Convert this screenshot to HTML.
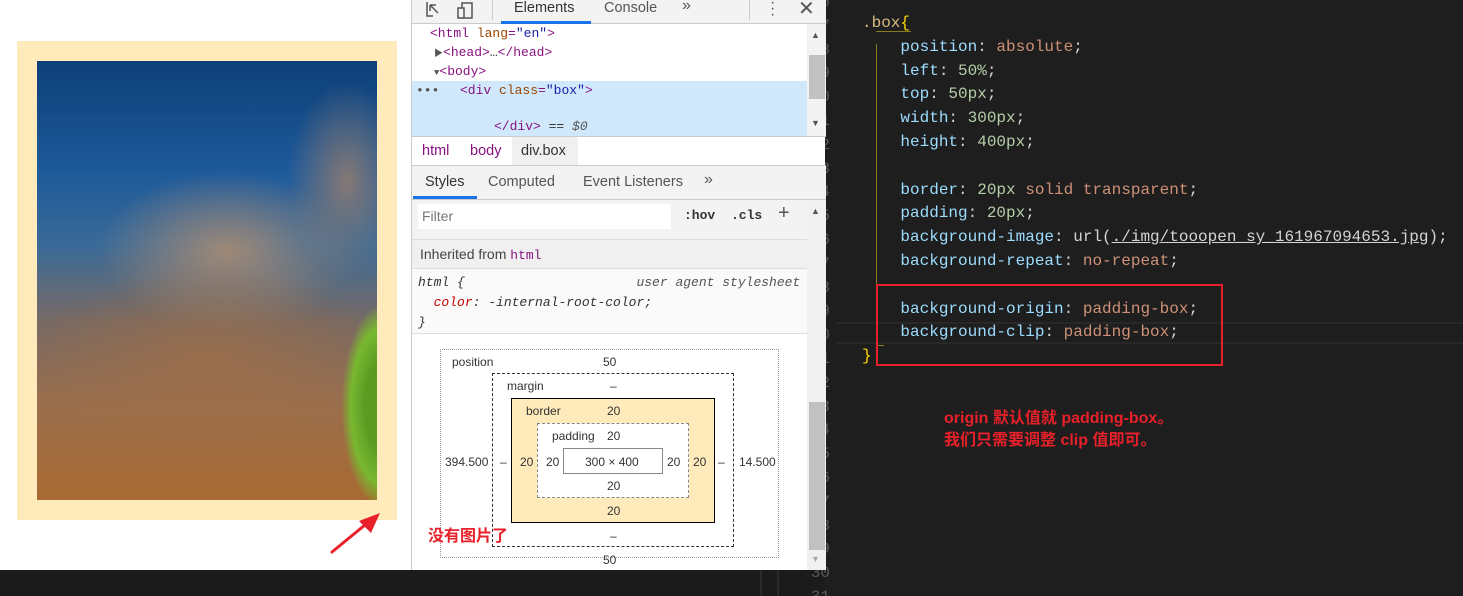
<!DOCTYPE html>
<html style="overflow:hidden;width:1463px;height:596px"><head><meta charset="utf-8"><style>
*{margin:0;padding:0;box-sizing:border-box}
body{width:1463px;height:596px;overflow:hidden;background:#1e1e1e;position:relative;font-family:"Liberation Sans","Noto Sans CJK SC",sans-serif}
.abs{position:absolute}
.mono{font-family:"Liberation Mono","Noto Sans CJK SC",monospace}
#page{left:0;top:0;width:411px;height:570px;background:#fff}
#bottom{left:0;top:570px;width:825px;height:26px;background:#1b1b1b}
#dt{left:411px;top:0;width:414px;height:570px;background:#fff;border-left:1px solid #ccc;font-size:14px;color:#333}
.code{font-size:16px;line-height:23.8px;left:862px;top:12px;color:#d4d4d4;white-space:pre}
.p{color:#9cdcfe}.v{color:#ce9178}.n{color:#b5cea8}
.tag{color:#881280}.at{color:#994500}.av{color:#1a1aa6}
</style></head><body>
<div class="abs" id="page">
  <div class="abs" style="left:17px;top:41px;width:380px;height:479px;background:#ffeabb"></div>
  <div class="abs" style="left:37px;top:61px;width:340px;height:439px;overflow:hidden;background:linear-gradient(180deg,#0d3f78 0%,#1e5a9a 25%,#3a6a98 42%,#7a6a62 60%,#9a6e4c 78%,#a86a32 100%)">
    <div class="abs" style="left:60px;top:110px;width:260px;height:160px;border-radius:50%;background:radial-gradient(ellipse,rgba(170,140,115,.9),rgba(140,115,100,.0) 70%)"></div>
    <div class="abs" style="left:250px;top:20px;width:120px;height:200px;border-radius:50%;background:radial-gradient(ellipse,rgba(150,125,110,.85),rgba(140,115,100,0) 70%)"></div>
    <div class="abs" style="left:0px;top:200px;width:340px;height:200px;border-radius:50%;background:radial-gradient(ellipse,rgba(160,110,70,.7),rgba(160,110,70,0) 70%)"></div>
    <div class="abs" style="left:305px;top:245px;width:80px;height:200px;border-radius:50%;background:radial-gradient(ellipse,#5c9a22 30%,#78b830 55%,rgba(120,180,40,0) 72%)"></div>
  </div>
  <svg class="abs" style="left:325px;top:505px" width="60" height="55"><line x1="7" y1="47" x2="46" y2="15" stroke="#e8202a" stroke-width="3" stroke-linecap="round"/><polygon points="55,8 34,16 46,28" fill="#e8202a"/></svg>
</div>
<div class="abs" id="bottom"></div>
<div class="abs" style="left:760px;top:570px;width:2px;height:26px;background:#2a2a2a"></div>
<div class="abs" style="left:777px;top:570px;width:2px;height:26px;background:#2a2a2a"></div>

<div class="abs mono" style="left:806px;top:0;width:24px;height:596px;overflow:hidden;color:#5a5a5a;font-size:16px;line-height:23.8px;text-align:right">
<div style="position:relative;top:-9px">6<br>7<br>8<br>9<br>0<br>1<br>2<br>3<br>4<br>5<br>6<br>7<br>8<br>9<br>0<br>1<br>2<br>3<br>4<br>5<br>6<br>7<br>8<br>9<br>30<br>31</div></div>

<div class="abs" id="dt">
  <div class="abs" style="left:0;top:0;width:414px;height:24px;background:#f3f3f3;border-bottom:1px solid #ccc"></div>
  <svg class="abs" style="left:13px;top:0" width="50" height="20"><path d="M2 2v14h6M5 5l8 8M5 5v6M5 5h6" stroke="#555" stroke-width="1.5" fill="none"/><rect x="37" y="3" width="10" height="15" stroke="#555" stroke-width="1.5" fill="none"/><rect x="33" y="8" width="6" height="10" stroke="#555" stroke-width="1.5" fill="#f3f3f3"/></svg>
  <div class="abs" style="left:80px;top:0;width:1px;height:20px;background:#ccc"></div>
  <div class="abs" style="left:102px;top:0;font-size:14.5px;color:#333">Elements</div>
  <div class="abs" style="left:89px;top:21px;width:90px;height:3px;background:#1a73e8"></div>
  <div class="abs" style="left:192px;top:0;font-size:14.5px;color:#555">Console</div>
  <div class="abs" style="left:270px;top:-3px;font-size:16px;color:#555">»</div>
  <div class="abs" style="left:337px;top:0;width:1px;height:20px;background:#ccc"></div>
  <div class="abs" style="left:358px;top:0;font-size:16px;color:#555;line-height:6px">·<br>·<br>·</div>
  <div class="abs" style="left:386px;top:-4px;font-size:20px;color:#555">✕</div>

  <div class="abs mono" style="left:0;top:24px;width:395px;height:112px;font-size:13px;line-height:19px">
    <div style="padding-left:18px;height:19px"><span class="tag">&lt;html</span> <span class="at">lang</span><span class="tag">=</span><span class="av">"en"</span><span class="tag">&gt;</span></div>
    <div style="padding-left:22px;height:19px"><span style="font-size:9px;color:#555">▶</span><span class="tag">&lt;head&gt;</span>…<span class="tag">&lt;/head&gt;</span></div>
    <div style="padding-left:22px;height:19px"><span style="font-size:9px;color:#555">▼</span><span class="tag">&lt;body&gt;</span></div>
    <div style="background:#cfe8fc;height:55px;padding-left:4px;position:relative"><span style="color:#555">•••</span><span style="position:absolute;left:48px;top:0"><span class="tag">&lt;div</span> <span class="at">class</span><span class="tag">=</span><span class="av">"box"</span><span class="tag">&gt;</span></span><span style="position:absolute;left:82px;top:36px"><span class="tag">&lt;/div&gt;</span> == <i style="color:#555">$0</i></span></div>
  </div>
  <div class="abs" style="left:395px;top:24px;width:19px;height:112px;background:#f3f3f3"></div>
  <div class="abs" style="left:397px;top:55px;width:16px;height:44px;background:#c1c1c1"></div>
  <div class="abs" style="left:399px;top:30px;font-size:9px;color:#555">▲</div>
  <div class="abs" style="left:399px;top:118px;font-size:9px;color:#555">▼</div>

  <div class="abs" style="left:0;top:136px;width:414px;height:30px;border-top:1px solid #ccc;border-bottom:1px solid #ccc;font-size:14.5px">
    <span class="abs" style="left:10px;top:6px;color:#881280">html</span>
    <span class="abs" style="left:58px;top:6px;color:#881280">body</span>
    <span class="abs" style="left:100px;top:0;width:66px;height:28px;background:#f0f0f0"></span>
    <span class="abs" style="left:109px;top:6px;color:#333">div.box</span>
  </div>
  <div class="abs" style="left:0;top:166px;width:414px;height:34px;background:#f3f3f3;border-bottom:1px solid #ccc;font-size:14.5px">
    <span class="abs" style="left:13px;top:8px;color:#333">Styles</span>
    <span class="abs" style="left:1px;top:30px;width:64px;height:3px;background:#1a73e8"></span>
    <span class="abs" style="left:76px;top:8px;color:#555">Computed</span>
    <span class="abs" style="left:171px;top:8px;color:#555">Event Listeners</span>
    <span class="abs" style="left:292px;top:5px;color:#555;font-size:16px">»</span>
  </div>
  <div class="abs" style="left:0;top:200px;width:395px;height:134px;background:#f3f3f3"></div>
  <div class="abs" style="left:6px;top:204px;width:253px;height:25px;background:#fff"></div>
  <div class="abs" style="left:10px;top:208px;font-size:14px;color:#777">Filter</div>
  <div class="abs mono" style="left:272px;top:208px;font-size:13px;font-weight:bold;color:#333">:hov</div>
  <div class="abs mono" style="left:319px;top:208px;font-size:13px;font-weight:bold;color:#333">.cls</div>
  <div class="abs" style="left:366px;top:202px;font-size:20px;color:#555">+</div>
  <div class="abs" style="left:0;top:239px;width:395px;height:1px;background:#ddd"></div>
  <div class="abs" style="left:0;top:240px;width:395px;height:29px;background:#f0f0f0;border-bottom:1px solid #ddd"></div>
  <div class="abs" style="left:8px;top:246px;font-size:14px;color:#444">Inherited from <span class="mono tag" style="font-size:13px">html</span></div>
  <div class="abs" style="left:0;top:269px;width:395px;height:65px;background:#fafafa;border-bottom:1px solid #ddd"></div>
  <div class="abs mono" style="left:6px;top:273px;font-size:13px;line-height:20px;font-style:italic;color:#333;white-space:pre">html {                      <span style="color:#555">user agent stylesheet</span>
  <span style="color:#c80000">color</span>: -internal-root-color;
}</div>
  <div class="abs" style="left:395px;top:200px;width:19px;height:370px;background:#f0f0f0"></div>
  <div class="abs" style="left:397px;top:402px;width:16px;height:148px;background:#c1c1c1"></div>
  <div class="abs" style="left:399px;top:206px;font-size:9px;color:#555">▲</div>
  <div class="abs" style="left:399px;top:554px;font-size:9px;color:#aaa">▼</div>

  <div class="abs" style="left:28px;top:349px;width:339px;height:209px;border:1px dotted #999"></div>
  <div class="abs" style="left:80px;top:373px;width:242px;height:174px;border:1px dashed #333"></div>
  <div class="abs" style="left:99px;top:398px;width:204px;height:125px;border:1px solid #000;background:#ffeabb"></div>
  <div class="abs" style="left:125px;top:423px;width:152px;height:75px;border:1px dashed #888;background:#fff"></div>
  <div class="abs" style="left:151px;top:448px;width:100px;height:26px;border:1px solid #888"></div>
  <div style="font-size:12px;color:#333">
  <span class="abs" style="left:40px;top:355px">position</span>
  <span class="abs" style="left:191px;top:355px">50</span>
  <span class="abs" style="left:95px;top:379px">margin</span>
  <span class="abs" style="left:198px;top:379px">–</span>
  <span class="abs" style="left:114px;top:404px">border</span>
  <span class="abs" style="left:195px;top:404px">20</span>
  <span class="abs" style="left:140px;top:429px">padding</span>
  <span class="abs" style="left:195px;top:429px">20</span>
  <span class="abs" style="left:33px;top:455px">394.500</span>
  <span class="abs" style="left:88px;top:455px">–</span>
  <span class="abs" style="left:108px;top:455px">20</span>
  <span class="abs" style="left:134px;top:455px">20</span>
  <span class="abs" style="left:173px;top:455px">300 × 400</span>
  <span class="abs" style="left:255px;top:455px">20</span>
  <span class="abs" style="left:281px;top:455px">20</span>
  <span class="abs" style="left:306px;top:455px">–</span>
  <span class="abs" style="left:327px;top:455px">14.500</span>
  <span class="abs" style="left:195px;top:479px">20</span>
  <span class="abs" style="left:195px;top:504px">20</span>
  <span class="abs" style="left:198px;top:529px">–</span>
  <span class="abs" style="left:191px;top:553px">50</span>
  </div>
  <div class="abs" style="left:16px;top:522px;font-size:16px;font-weight:bold;color:#e8202a">没有图片了</div>
</div>

<div class="abs" style="left:876px;top:44px;width:1px;height:302px;background:#8a7a20"></div>
<div class="abs" style="left:876px;top:345px;width:8px;height:1px;background:#8a7a20"></div>
<div class="abs" style="left:876px;top:31px;width:35px;height:1px;background:#8a7a20"></div>
<div class="abs" style="left:836px;top:322px;width:627px;height:2px;background:#282828"></div>
<div class="abs" style="left:836px;top:342px;width:627px;height:2px;background:#282828"></div>
<div class="abs mono code"><span style="color:#d7ba7d">.box</span><span style="color:#ffd700">{</span>
    <span class="p">position</span>: <span class="v">absolute</span>;
    <span class="p">left</span>: <span class="n">50%</span>;
    <span class="p">top</span>: <span class="n">50px</span>;
    <span class="p">width</span>: <span class="n">300px</span>;
    <span class="p">height</span>: <span class="n">400px</span>;

    <span class="p">border</span>: <span class="n">20px</span> <span class="v">solid transparent</span>;
    <span class="p">padding</span>: <span class="n">20px</span>;
    <span class="p">background-image</span>: url(<span style="text-decoration:underline">./img/tooopen_sy_161967094653.jpg</span>);
    <span class="p">background-repeat</span>: <span class="v">no-repeat</span>;

    <span class="p">background-origin</span>: <span class="v">padding-box</span>;
    <span class="p">background-clip</span>: <span class="v">padding-box</span>;
<span style="color:#ffd700">}</span></div>
<div class="abs" style="left:876px;top:284px;width:347px;height:82px;border:2px solid #e8202a"></div>
<div class="abs" style="left:944px;top:408px;font-size:16px;font-weight:bold;color:#e8202a;line-height:22px">origin 默认值就 padding-box。<br>我们只需要调整 clip 值即可。</div>
</body></html>
